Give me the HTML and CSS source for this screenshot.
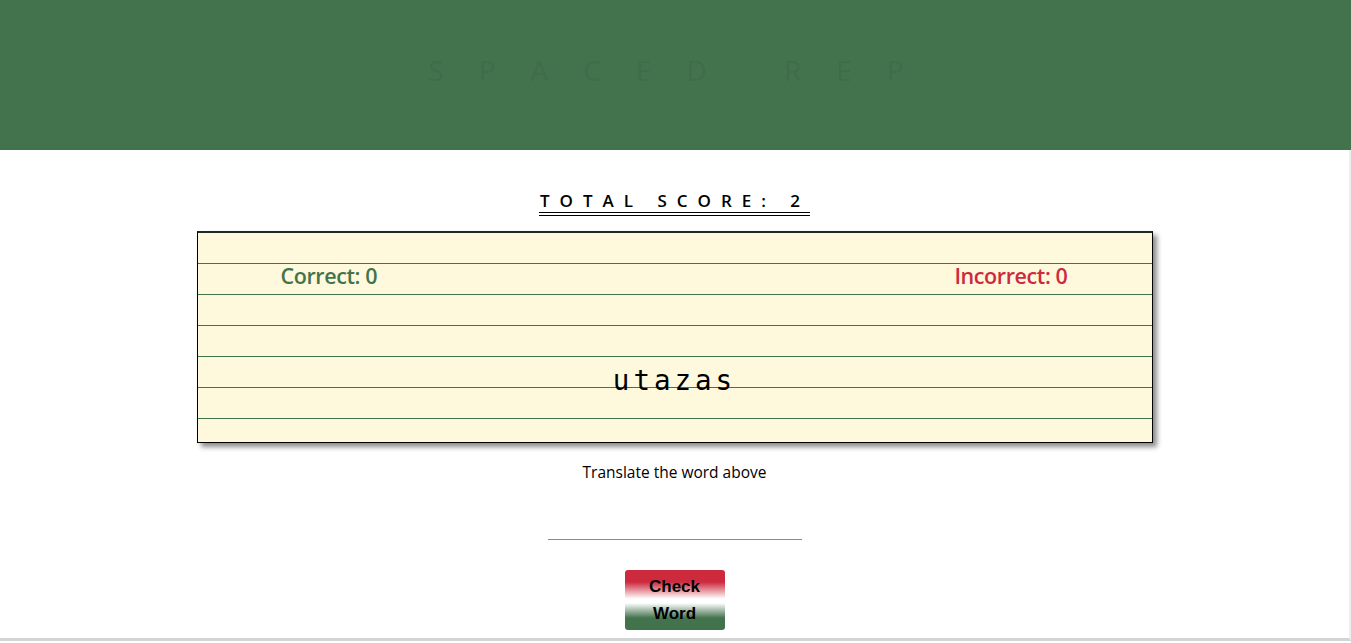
FILE: index.html
```html
<!DOCTYPE html>
<html lang="en">
<head>
<meta charset="utf-8">
<title>Spaced Rep</title>
<link rel="stylesheet" href="styles.css">
</head>
<body>
<header class="top">
  <h1 class="brand">SPACED REP</h1>
</header>
<main class="main">
  <h2 class="total">TOTAL SCORE: 2</h2>
  <section class="card">
    <div class="counters">
      <span class="correct">Correct: 0</span>
      <span class="incorrect">Incorrect: 0</span>
    </div>
    <div class="word">utazas</div>
  </section>
  <p class="hint">Translate the word above</p>
  <input class="answer" type="text" aria-label="Translation">
  <button class="check" type="button">Check Word</button>
</main>
</body>
</html>
```

FILE: styles.css
```css
html, body {
  margin: 0;
  padding: 0;
  background: #ffffff;
  font-family: "Open Sans", "Noto Sans", sans-serif;
  overflow: hidden;
}

.top {
  height: 150px;
  box-sizing: border-box;
  padding-bottom: 10px;
  background: #43734d;
  display: flex;
  align-items: center;
  justify-content: center;
}

.brand {
  margin: 0;
  padding-left: 16px;
  font-family: "Open Sans", sans-serif;
  font-weight: 400;
  font-size: 28px;
  letter-spacing: 35px;
  color: #3f6c49;
}

.main {
  display: flex;
  flex-direction: column;
  align-items: center;
  padding-top: 40px;
  height: 448px;
  border-right: 2px solid #efefef;
  border-bottom: 3px solid #d4d4d4;
}

.total {
  margin: 0;
  font-family: "Open Sans", sans-serif;
  font-size: 17px;
  font-weight: 600;
  line-height: 22px;
  letter-spacing: 10px;
  padding-left: 1px;
  color: #000;
  border-bottom: 4px double #000;
}

.card {
  margin-top: 15px;
  width: 954px;
  height: 209px;
  border: 1px solid #000;
  border-top: 2px solid #1c2a1f;
  background-color: #fef8dc;
  background-image: repeating-linear-gradient(to bottom,
    transparent 0px, transparent 30px, #43734d 30px, #43734d 31px);
  box-shadow: 4px 4px 5px rgba(0, 0, 0, 0.45);
  display: flex;
  flex-direction: column;
}

.counters {
  margin-top: 30px;
  padding: 0 84px 0 83px;
  display: flex;
  justify-content: space-between;
  font-size: 21.5px;
  font-weight: 600;
  line-height: 26px;
  letter-spacing: -0.4px;
}

.correct { color: #43734d; }
.incorrect { color: #cd2a3e; }

.word {
  margin-top: 73px;
  text-align: center;
  font-family: "DejaVu Sans Mono", monospace;
  font-size: 27.5px;
  line-height: 36px;
  letter-spacing: 4px;
  color: #000;
}

.hint {
  margin: 19px 0 0;
  font-size: 15.5px;
  line-height: 20px;
  color: #000;
}

.answer {
  margin-top: 28px;
  width: 254px;
  height: 30px;
  box-sizing: border-box;
  border: none;
  border-bottom: 1px solid #8a8a8a;
  background: transparent;
  outline: none;
  font-size: 16px;
  text-align: center;
}

.check {
  margin-top: 30px;
  width: 100px;
  height: 60px;
  padding: 0 10px;
  border: none;
  border-radius: 3px;
  background: linear-gradient(to bottom, #cd2a3e 0%, #cd2a3e 20%, #ffffff 48%, #ffffff 55%, #43734d 80%, #43734d 100%);
  font-family: "Liberation Sans", Arial, sans-serif;
  font-weight: 700;
  font-size: 17px;
  line-height: 27px;
  color: #000;
  cursor: pointer;
}
```
